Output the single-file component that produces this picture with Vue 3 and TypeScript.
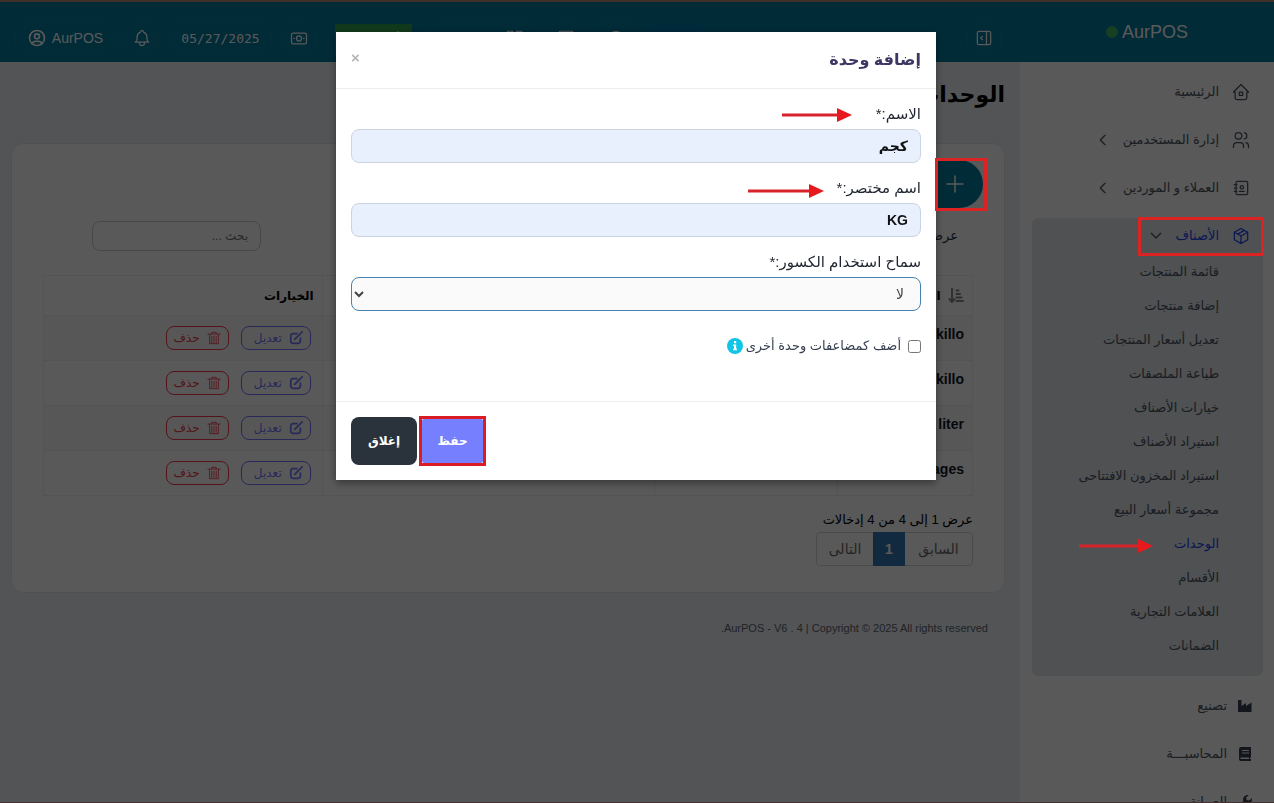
<script setup lang="ts">
import { ref } from 'vue'

interface MenuItem {
  label: string
  icon: string
  chevron?: boolean
}

const topMenu: MenuItem[] = [
  { label: 'الرئيسية', icon: 'home' },
  { label: 'إدارة المستخدمين', icon: 'users', chevron: true },
  { label: 'العملاء و الموردين', icon: 'contacts', chevron: true },
]

const productMenu: string[] = [
  'قائمة المنتجات',
  'إضافة منتجات',
  'تعديل أسعار المنتجات',
  'طباعة الملصقات',
  'خيارات الأصناف',
  'استيراد الأصناف',
  'استيراد المخزون الافتتاحى',
  'مجموعة أسعار البيع',
  'الوحدات',
  'الأقسام',
  'العلامات التجارية',
  'الضمانات',
]
const activeItem = 'الوحدات'

const bottomMenu: MenuItem[] = [
  { label: 'تصنيع', icon: 'factory' },
  { label: 'المحاسبـــة', icon: 'book' },
  { label: 'الصيانة', icon: 'wrench' },
]

const units: string[] = ['killo', 'killo', 'liter', 'packages']

const name = ref('كجم')
const shortName = ref('KG')
const allowDecimal = ref('0')
const asMultiple = ref(false)
</script>

<template>
  <div class="page" dir="rtl">
    <header class="topbar">
      <div class="brand"><span>AurPOS</span><i class="dot"></i></div>
      <div class="tools">
        <button class="tool square" type="button" aria-label="القائمة">
          <svg class="ic20" viewBox="0 0 24 24"><rect x="4" y="4" width="16" height="16" rx="2" /><path d="M15 4v16M10 10l-2 2l2 2" /></svg>
        </button>
        <div class="spacer"></div>
        <button class="tool blue" type="button" aria-label="جديد"></button>
        <button class="tool wide" type="button" aria-label="الوقت">
          <svg class="ic18" viewBox="0 0 24 24"><circle cx="12" cy="12" r="9" /></svg>
        </button>
        <button class="tool square" type="button" aria-label="الحاسبة">
          <svg class="ic18" viewBox="0 0 24 24"><rect x="3" y="3" width="18" height="18" rx="1" /></svg>
        </button>
        <button class="tool pos" type="button" aria-label="نقطة البيع">
          <svg class="ic18" viewBox="0 0 24 24"><rect x="2" y="3" width="7" height="7" /><rect x="14" y="3" width="7" height="7" /></svg>
        </button>
        <button class="green" type="button">أضف</button>
        <button class="tool square" type="button" aria-label="النقدية">
          <svg class="ic20" viewBox="0 0 24 24"><rect x="3" y="6" width="18" height="13" rx="2" /><circle cx="12" cy="12.500" r="3" /><path d="M6 12.500h.5M17.500 12.500h.5" /></svg>
        </button>
        <button class="tool date" type="button">05/27/2025</button>
        <button class="tool square" type="button" aria-label="التنبيهات">
          <svg class="ic20" viewBox="0 0 24 24"><path d="M10 5a2 2 0 1 1 4 0a7 7 0 0 1 4 6v3a4 4 0 0 0 2 3h-16a4 4 0 0 0 2-3v-3a7 7 0 0 1 4-6" /><path d="M9 17v1a3 3 0 0 0 6 0v-1" /></svg>
        </button>
        <button class="tool user" type="button">
          <span>AurPOS</span>
          <svg class="ic20 bold" viewBox="0 0 24 24"><circle cx="12" cy="12" r="9" /><circle cx="12" cy="10" r="3" /><path d="M6.200 18.800a4 4 0 0 1 3.800-2.800h4a4 4 0 0 1 3.800 2.800" /></svg>
        </button>
      </div>
    </header>

    <div class="body">
      <aside class="sidebar">
        <a v-for="m in topMenu" :key="m.label" class="item" href="#">
          <svg v-if="m.icon === 'home'" class="ic20" viewBox="0 0 24 24"><path d="M5 12H3l9-9l9 9h-2M5 12v7a2 2 0 0 0 2 2h10a2 2 0 0 0 2-2v-7" /><path d="M10 12h4v4h-4z" /></svg>
          <svg v-else-if="m.icon === 'users'" class="ic20" viewBox="0 0 24 24"><circle cx="9" cy="7" r="4" /><path d="M3 21v-2a4 4 0 0 1 4-4h4a4 4 0 0 1 4 4v2M16 3.130a4 4 0 0 1 0 7.750M21 21v-2a4 4 0 0 0-3-3.850" /></svg>
          <svg v-else class="ic20" viewBox="0 0 24 24"><path d="M20 6v12a2 2 0 0 1-2 2H8a2 2 0 0 1-2-2V6a2 2 0 0 1 2-2h10a2 2 0 0 1 2 2z" /><path d="M10 16h6M4 8h3M4 12h3M4 16h3" /><circle cx="13" cy="11" r="2" /></svg>
          <span>{{ m.label }}</span>
          <svg v-if="m.chevron" class="chev" viewBox="0 0 24 24"><path d="M15 5l-7 7l7 7" /></svg>
        </a>

        <div class="group">
          <a class="item current" href="#">
            <svg class="ic20" viewBox="0 0 24 24"><path d="M12 3l8 4.500v9L12 21l-8-4.500v-9zM12 12l8-4.500M12 12v9M12 12L4 7.500M16 5.250l-8 4.500" /></svg>
            <span>الأصناف</span>
            <svg class="chev" viewBox="0 0 24 24"><path d="M5 8l7 7l7-7" /></svg>
          </a>
          <a v-for="p in productMenu" :key="p" class="sub" :class="{ current: p === activeItem }" href="#">{{ p }}</a>
        </div>

        <a v-for="m in bottomMenu" :key="m.label" class="item solid" href="#">
          <svg v-if="m.icon === 'factory'" class="ic16" viewBox="0 0 16 16"><path d="M1 2h3.500v6L9 5v3l5.500-3.500V14H1z" /></svg>
          <svg v-else-if="m.icon === 'book'" class="ic16" viewBox="0 0 16 16"><path fill-rule="evenodd" d="M4 1h10v10.500h-1V13h1v2H4a2 2 0 0 1-2-2V3a2 2 0 0 1 2-2zm0 10.500a.8.8 0 0 0 0 1.500h8v-1.500zM5 4v1h7V4zm0 2.500v1h7v-1z" /></svg>
          <svg v-else class="ic16" viewBox="0 0 16 16"><path d="M14.800 4.300l-2.600 2.200l-2.600-.6l-.5-2.400L11.500 1.200A4.500 4.500 0 0 0 6.300 7L1.500 11.800a2 2 0 0 0 2.800 2.800L9 9.800a4.500 4.500 0 0 0 5.800-5.500z" /></svg>
          <span>{{ m.label }}</span>
        </a>
      </aside>

      <main class="main">
        <h1>الوحدات</h1>
        <section class="card">
          <button class="add" type="button" aria-label="إضافة">
            <svg class="ic24" viewBox="0 0 24 24"><path d="M12 4v16M4 12h16" /></svg>
          </button>
          <div class="filters">
            <span>عرض</span>
            <input type="search" class="search" placeholder="بحث ..." aria-label="بحث" />
          </div>
          <table>
            <colgroup>
              <col class="c1" /><col class="c2" /><col class="c3" /><col class="c4" />
            </colgroup>
            <thead>
              <tr>
                <th>
                  <svg class="sort" viewBox="0 0 16 16"><path d="M4 1v13M1.500 11L4 14l2.500-3M8.500 2.500h2M8.500 6h3.500M8.500 9.500h5M8.500 13h6.500" /></svg>
                  الاسم
                </th>
                <th></th>
                <th></th>
                <th>الخيارات</th>
              </tr>
            </thead>
            <tbody>
              <tr v-for="(u, i) in units" :key="i">
                <td class="unit">{{ u }}</td>
                <td></td>
                <td></td>
                <td>
                  <div class="acts">
                    <button class="act edit" type="button">
                      <svg class="ic14" viewBox="0 0 16 16"><path d="M9 3H4.500A2.500 2.500 0 0 0 2 5.500v6A2.500 2.500 0 0 0 4.500 14h6a2.500 2.500 0 0 0 2.500-2.500V8" /><path d="M6.500 9.500L13 3M14 2l1-1" /></svg>
                      تعديل
                    </button>
                    <button class="act del" type="button">
                      <svg class="ic14" viewBox="0 0 16 16"><path d="M1 3.500h14M5.500 3V1.500h5V3M3 4v10.500h10V4M5.500 6v7M8 6v7M10.500 6v7" /></svg>
                      حذف
                    </button>
                  </div>
                </td>
              </tr>
            </tbody>
          </table>
          <p class="info">عرض 1 إلى 4 من 4 إدخالات</p>
          <nav class="pages">
            <a class="prev" href="#">السابق</a><a class="on" href="#">1</a><a class="next" href="#">التالى</a>
          </nav>
        </section>
        <footer class="foot">AurPOS - V6 . 4 | Copyright © 2025 All rights reserved.</footer>
      </main>
    </div>

    <div class="backdrop">
      <form class="modal" @submit.prevent>
        <div class="mhead">
          <h2>إضافة وحدة</h2>
          <button class="x" type="button" aria-label="إغلاق النافذة">×</button>
        </div>
        <div class="mbody">
          <div class="field">
            <label for="unit-name">الاسم:*</label>
            <input id="unit-name" v-model="name" type="text" />
            <svg class="arrow a1" viewBox="0 0 70 16"><path class="line" d="M0 8h57" /><path class="head" d="M55 1l15 7l-15 7z" /></svg>
          </div>
          <div class="field">
            <label for="unit-short">اسم مختصر:*</label>
            <input id="unit-short" v-model="shortName" type="text" />
            <svg class="arrow a2" viewBox="0 0 76 16"><path class="line" d="M0 8h63" /><path class="head" d="M61 1l15 7l-15 7z" /></svg>
          </div>
          <div class="field">
            <label for="unit-dec">سماح استخدام الكسور:*</label>
            <select id="unit-dec" v-model="allowDecimal">
              <option value="0">لا</option>
            </select>
          </div>
          <div class="check">
            <input id="unit-mult" v-model="asMultiple" type="checkbox" />
            <label for="unit-mult">أضف كمضاعفات وحدة أخرى</label>
            <svg class="ic16" viewBox="0 0 16 16"><circle cx="8" cy="8" r="8" fill="#11c5e6" /><path fill="#fff" d="M7 3h2.200v2.200H7zM6 6.500h3.200v4.300H10V12.200H6v-1.400h1V8H6z" /></svg>
          </div>
        </div>
        <div class="mfoot">
          <div class="marked"><button class="btn save" type="submit">حفظ</button></div>
          <button class="btn close" type="button">إغلاق</button>
        </div>
      </form>
    </div>

    <div class="mark m-add"></div>
    <div class="mark m-group"></div>
    <svg class="arrow m-sub" viewBox="0 0 74 16"><path class="line" d="M0 8h61" /><path class="head" d="M59 1l15 7l-15 7z" /></svg>
    <div class="edge"></div>
  </div>
</template>

<style>
body {
  margin: 0;
  overflow: hidden;
}
</style>

<style scoped>
.page,
.page * {
  box-sizing: border-box;
}
.page {
  height: 100vh;
  overflow: hidden;
  display: flex;
  flex-direction: column;
  background: #eef1f6;
  font-family: "Liberation Sans", "DejaVu Sans", sans-serif;
  font-size: 14px;
  line-height: 20px;
  color: #1f2937;
}
button,
input,
select {
  font-family: inherit;
  margin: 0;
}
a {
  color: inherit;
  text-decoration: none;
}
svg {
  fill: none;
  stroke: currentColor;
  stroke-width: 2;
  stroke-linecap: round;
  stroke-linejoin: round;
  flex: none;
}
.ic14 { width: 14px; height: 14px; }
.ic16 { width: 16px; height: 16px; fill: currentColor; stroke: none; }
.ic18 { width: 18px; height: 18px; }
.ic20 { width: 20px; height: 20px; }
.ic24 { width: 24px; height: 24px; }

.topbar {
  flex: none;
  height: 62px;
  display: flex;
  border-top: 2px solid #c08878;
  background: #007b9e;
  color: #fff;
}
.brand {
  width: 254px;
  display: flex;
  align-items: center;
  justify-content: center;
  gap: 4px;
  font-size: 18px;
}
.dot {
  width: 12px;
  height: 12px;
  border-radius: 50%;
  background: #41b860;
}
.tools {
  flex: 1;
  display: flex;
  align-items: flex-start;
  gap: 10px;
  padding: 19px 19px 0 15px;
}
.spacer { flex: 1; }
.tool {
  height: 34px;
  padding: 0;
  display: flex;
  align-items: center;
  justify-content: center;
  gap: 5px;
  background: transparent;
  border: 1px solid #128199;
  border-radius: 10px;
  color: #fff;
  font-size: 14px;
}
.square { width: 34px; }
.wide { width: 46px; }
.blue { width: 56px; margin-top: 3px; border: 0; background: #0077aa; }
.pos { width: 108px; justify-content: flex-start; padding-right: 14px; }
.date { width: 103px; font-family: "DejaVu Sans Mono", monospace; font-size: 13px; }
.user { width: 100px; }
.green {
  width: 77px;
  height: 31px;
  margin: 3px 9px;
  padding: 0 12px;
  border: 0;
  background: #2fa24e;
  color: #fff;
  font-size: 14px;
  text-align: right;
}

.body {
  flex: 1;
  min-height: 0;
  display: flex;
}
.sidebar {
  width: 254px;
  padding: 12px 11px 0 12px;
  background: #fff;
  display: flex;
  flex-direction: column;
  gap: 12px;
  font-size: 13px;
  color: #4b5563;
}
.item {
  flex: none;
  height: 36px;
  padding: 0 12px;
  display: flex;
  align-items: center;
  gap: 12px;
}
.item .chev {
  width: 16px;
  height: 16px;
}
.item.solid { gap: 10px; padding-right: 10px; }
.item.solid svg { color: #374151; }
.group {
  flex: none;
  background: #e5e7eb;
  border-radius: 6px;
  padding-bottom: 13px;
  display: flex;
  flex-direction: column;
}
.item.current { margin-bottom: 1px; }
.item.current,
.sub.current { color: #1d43f0; }
.item.current .chev { color: #4b5563; }
.sub {
  height: 34px;
  line-height: 34px;
  padding-right: 44px;
}

.main {
  flex: 1;
  min-width: 0;
  padding: 15px 15px 0 11px;
}
h1 {
  margin: 0;
  font-size: 22px;
  line-height: 36px;
  color: #000;
}
.card {
  margin-top: 30px;
  background: #fff;
  border: 1px solid #e3e6ea;
  border-radius: 12px;
  padding: 16px 31px 26px;
}
.add {
  display: flex;
  align-items: center;
  width: 110px;
  height: 48px;
  margin-right: -10px;
  padding: 0 16px;
  border: 0;
  border-radius: 24px;
  background: #007b9e;
  color: #fff;
}
.filters {
  height: 30px;
  margin-top: 13px;
  padding: 0 15px 0 49px;
  display: flex;
  align-items: center;
  justify-content: space-between;
  font-size: 13px;
}
.search {
  width: 169px;
  height: 30px;
  padding: 0 12px;
  border: 1px solid #c9ccd1;
  border-radius: 8px;
  background: transparent;
  font-size: 12px;
}
table {
  width: 100%;
  margin-top: 24px;
  border-collapse: collapse;
  table-layout: fixed;
  color: #111827;
}
.c1 { width: 14.5%; }
.c2 { width: 19.7%; }
.c3 { width: 35.8%; }
.c4 { width: 30%; }
th,
td {
  border: 1px solid #f0f0f0;
  padding: 0 8px;
  text-align: right;
  font-weight: bold;
}
th { height: 40px; font-size: 12px; color: #000; }
td { height: 45px; }
td.unit { padding-bottom: 8px; }
tbody tr:nth-child(odd) { background: #f9f9f9; }
.sort {
  width: 16px;
  height: 16px;
  color: #8a8a8a;
  vertical-align: middle;
  margin-left: 4px;
}
.acts {
  display: flex;
  gap: 12px;
  padding-right: 3px;
}
.act {
  height: 24px;
  display: flex;
  align-items: center;
  gap: 7px;
  padding: 0 7px;
  border: 1px solid;
  border-radius: 8px;
  background: transparent;
  font-size: 12px;
}
.edit { width: 70px; color: #7575ff; }
.del { width: 63px; color: #f23a4a; }
.del svg { stroke-width: 1; }
.info {
  margin: 14px 0 2px;
  font-size: 13px;
  color: #000;
}
.pages {
  display: flex;
  width: 157px;
  height: 34px;
  border: 1px solid #d5d8dc;
  border-radius: 4px;
  line-height: 32px;
  color: #6b6b6b;
  text-align: center;
}
.pages .prev { width: 67px; }
.pages .next { flex: 1; }
.pages .on {
  width: 32px;
  margin: -1px 0;
  line-height: 34px;
  background: #337ab7;
  color: #fff;
  font-weight: bold;
}
.foot {
  padding: 25px 17px 0 0;
  font-size: 11px;
  color: #5b6470;
}

.backdrop {
  position: fixed;
  inset: 0;
  background: rgba(0, 0, 0, 0.65);
  display: flex;
  justify-content: center;
  align-items: flex-start;
  padding: 32px 2px 0 0;
}
.modal {
  width: 600px;
  background: #fff;
  box-shadow: 0 3px 8px rgba(0, 0, 0, 0.4);
}
.mhead {
  height: 57px;
  padding: 0 15px;
  display: flex;
  align-items: center;
  justify-content: space-between;
  border-bottom: 1px solid #ebedf0;
}
h2 {
  margin: 0;
  font-size: 16px;
  color: #3b3663;
}
.x {
  padding: 0 0 4px;
  width: 9px;
  border: 0;
  background: transparent;
  color: #b5b5b5;
  font-size: 15px;
  font-weight: bold;
  line-height: 16px;
}
.mbody { padding: 15px 15px 35px; }
.field {
  position: relative;
  display: flex;
  flex-direction: column;
  margin-bottom: 15px;
}
.field label {
  margin-bottom: 5px;
  align-self: flex-start;
  font-size: 15px;
  color: #1f2430;
}
.field input,
.field select {
  width: 100%;
  height: 34px;
  padding: 0 12px;
  border: 1px solid #ccd4e0;
  border-radius: 8px;
  background: #e8f0fe;
  font-size: 14px;
  font-weight: bold;
  color: #111;
}
.field select {
  padding: 0 12px 0 0;
  border-color: #4682ae;
  background: #fafafa;
  font-weight: normal;
  color: #444;
}
.check {
  display: flex;
  align-items: center;
  height: 40px;
  font-size: 13px;
  color: #374151;
}
.check input {
  width: 13px;
  height: 13px;
}
.check label { margin: 0 7px 0 3px; }
.mfoot {
  height: 79px;
  padding: 15px;
  display: flex;
  justify-content: flex-end;
  gap: 2px;
  border-top: 1px solid #ebedf0;
}
.marked {
  margin: -1px 0;
  border: 3px solid #dc1c24;
  height: 50px;
}
.btn {
  height: 48px;
  width: 66px;
  padding: 0;
  border: 0;
  border-radius: 8px;
  color: #fff;
  font-size: 12px;
  font-weight: bold;
}
.save {
  width: 61px;
  height: 44px;
  border-radius: 2px;
  background: #7680ff;
  display: block;
}
.close { background: #2a323c; }

.arrow { position: absolute; height: 16px; }
.line { stroke: #d8232a; stroke-width: 3; stroke-linecap: butt; }
.head { fill: #e8191c; stroke: none; }
.a1 { width: 70px; right: 69px; top: 3px; }
.a2 { width: 76px; right: 97px; top: 5px; }
.mark {
  position: fixed;
  border: 3px solid #dc2323;
}
.m-add { top: 158px; right: 287px; width: 52px; height: 53px; }
.m-group { top: 217px; right: 10px; width: 126px; height: 39px; }
.m-sub { position: fixed; top: 538px; right: 121px; width: 74px; }
.edge {
  position: fixed;
  left: 0;
  right: 0;
  bottom: 0;
  height: 1px;
  background: #45302f;
}
.item svg,
.tool svg,
.add svg { stroke-width: 1.500; }
.tool svg.bold { stroke-width: 2; }
.item .chev { stroke-width: 2; }
.item.solid svg { stroke: none; }
</style>
